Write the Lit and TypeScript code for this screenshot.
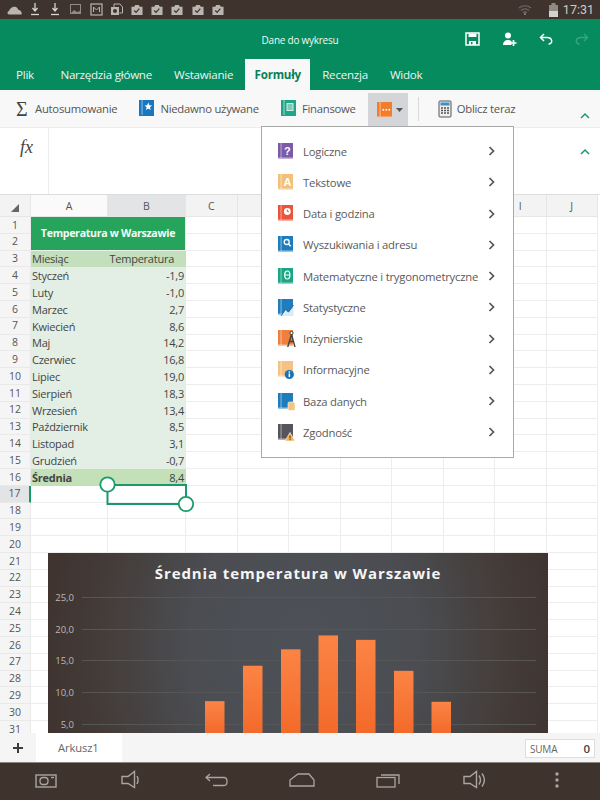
import { LitElement, html, css, svg } from "lit";
import { customElement } from "lit/decorators.js";

const months: [string, string][] = [
  ["Styczeń", "-1,9"], ["Luty", "-1,0"], ["Marzec", "2,7"], ["Kwiecień", "8,6"],
  ["Maj", "14,2"], ["Czerwiec", "16,8"], ["Lipiec", "19,0"], ["Sierpień", "18,3"],
  ["Wrzesień", "13,4"], ["Październik", "8,5"], ["Listopad", "3,1"], ["Grudzień", "-0,7"],
];
const bars = [[205, 8.6], [243, 14.2], [281, 16.8], [318.5, 19.0], [356, 18.3], [394, 13.4], [431.5, 8.5]];
const ticks: [string, number][] = [["25,0", 44], ["20,0", 76], ["15,0", 107], ["10,0", 139], ["5,0", 171]];

const book = (color: string, inner: unknown = "", light = "rgba(255,255,255,.55)") => html`
  <svg class="book" width="17" height="19" viewBox="0 0 17 19">
    <rect x="1" y="1" width="15" height="16" fill=${color}></rect>
    <rect x="1" y="15.5" width="15" height="1.5" fill=${light}></rect>
    <rect x="3.6" y="1" width="0.9" height="15" fill=${light}></rect>
    ${inner}
  </svg>`;
const glyph = (t: string, size = 11) =>
  svg`<text x="10.3" y="12.6" text-anchor="middle" font-size=${size} font-weight="700" font-family="Liberation Sans, sans-serif" fill="#fff">${t}</text>`;

const menuItems: [string, unknown][] = [
  ["Logiczne", book("#7b5aa6", glyph("?"))],
  ["Tekstowe", book("#f2c078", glyph("A"))],
  ["Data i godzina", book("#e8553a", svg`<circle cx="10.3" cy="7.5" r="3.4" fill="#fff"></circle><path d="M10.3 5.6v2h1.6" stroke="#e8553a" fill="none"></path>`)],
  ["Wyszukiwania i adresu", book("#1f7dbd", svg`<circle cx="9.7" cy="7" r="2.5" fill="none" stroke="#fff" stroke-width="1.3"></circle><path d="M11.5 9l2.2 2.2" stroke="#fff" stroke-width="1.5"></path>`)],
  ["Matematyczne i trygonometryczne", book("#1aa583", svg`<ellipse cx="10.3" cy="8" rx="2.6" ry="4" fill="none" stroke="#fff" stroke-width="1.2"></ellipse><path d="M8 8h4.6" stroke="#fff"></path>`)],
  ["Statystyczne", book("#1f7dbd", svg`<path d="M4.5 18l4-6 3 2.5 5-6.5v10z" fill="#dfeaf3"></path><path d="M4 18l4.500-7 3 3 5-7" fill="none" stroke="#2a6fa8" stroke-width="1"></path>`)],
  ["Inżynierskie", book("#ee7f3c", svg`<circle cx="14.500" cy="4" r="1.600" fill="#fff" stroke="#444"></circle><path d="M14.500 5.500L10.700 18M14.500 5.500L18 18M12 12.500h5" fill="none" stroke="#444" stroke-width="1.400"></path>`)],
  ["Informacyjne", book("#f4c384", svg`<circle cx="12.300" cy="14.500" r="4.600" fill="#1673b8"></circle><rect x="11.600" y="13.500" width="1.500" height="3.600" fill="#fff"></rect><rect x="11.600" y="11.300" width="1.500" height="1.400" fill="#fff"></rect>`)],
  ["Baza danych", book("#1f7dbd", svg`<rect x="11" y="10" width="7" height="8.500" rx="1.500" fill="#f4c384" stroke="#fff" stroke-width=".6"></rect>`)],
  ["Zgodność", book("#55555b", svg`<path d="M13 9.500l5 8.500H8z" fill="#f3b24e" stroke="#fff" stroke-width=".6"></path><path d="M13 12.500v3M13 16.200v1" stroke="#333" stroke-width="1"></path>`)],
];

const navStroke = "#aaa5a1";

@customElement("app-root")
export class AppRoot extends LitElement {
  static styles = css`
    :host { display: block; width: 600px; height: 800px; font-family: "Open Sans", "Noto Sans", sans-serif; }
    .app { position: relative; width: 600px; height: 800px; display: flex; flex-direction: column; overflow: hidden; background: #fff; }
    svg { display: block; flex: none; }
    .book { overflow: visible; }

    .status { height: 19px; background: #3f332e; display: flex; align-items: center; padding: 0 6px 0 4.5px; flex: none; }
    .status-icons { display: grid; grid-auto-flow: column; grid-auto-columns: 20.35px; justify-items: center; align-items: center; flex: 1; }
    .clock { color: #cfcac6; font-size: 12.5px; font-family: "Roboto", sans-serif; margin-left: 5px; }
    .wifi { margin-right: 17px; }

    .title { height: 40px; flex: none; background: #068b5f; position: relative; display: flex; align-items: center; justify-content: flex-end; padding: 0 11px 0 0; gap: 22px; }
    .doc { position: absolute; left: 0; right: 0; top: 14px; text-align: center; color: #f1f8f5; font-size: 10px; letter-spacing: -0.25px; line-height: 14px; }
    .tabs { height: 31px; flex: none; background: #068b5f; display: flex; align-items: flex-end; padding-left: 16px; color: #e9f5f0; font-size: 11.6px; letter-spacing: -0.25px; }
    .tab { line-height: 31px; height: 31px; margin-right: 22px; white-space: nowrap; }
    .tab.first { margin-right: 26.5px; }
    .tab.on { width: 65px; text-align: center; background: #f8f8f8; color: #0a7f58; font-weight: 700; margin: 0 12px 0 -10px; }

    .ribbon { height: 37px; flex: none; background: #f8f8f8; display: flex; align-items: center; padding-left: 16px; color: #555; font-size: 11.3px; letter-spacing: -0.25px; position: relative; }
    .ri { display: flex; align-items: center; white-space: nowrap; }
    .ri.next { margin-left: 21px; }
    .ri .book { margin-right: 5px; }
    .ri .calc { margin-right: 5px; }
    .sigma { font-family: "Liberation Serif", serif; font-size: 20px; color: #444; width: 19px; line-height: 20px; }
    .active { align-self: flex-end; height: 34px; width: 40px; background: #d3d5d8; display: flex; align-items: center; padding-left: 8px; box-sizing: border-box; gap: 3px; margin-left: 12px; }
    .divider { width: 1px; height: 24px; background: #d9d9d9; margin: 0 19px 0 10px; }
    .chev { position: absolute; }
    .ribbon .chev { left: 580px; top: 22px; }

    .formula { height: 68px; flex: none; background: #fff; border-top: 1px solid #ececec; border-bottom: 1px solid #dcdcdc; box-sizing: border-box; display: flex; position: relative; }
    .fx { width: 49px; box-sizing: border-box; border-right: 1px solid #ececec; font-family: "Liberation Serif", serif; font-style: italic; font-size: 18px; color: #444; padding: 9px 0 0 20px; }
    .formula .chev { left: 580px; top: 20px; }

    .sheet { flex: 1; position: relative; overflow: hidden; }
    .grid { display: grid; grid-template-columns: 31px 77px 78px repeat(8, 51.5px) 2px; grid-template-rows: 22px; grid-auto-rows: 16.8px; }
    .c { box-sizing: border-box; border-right: 1px solid #ededed; border-bottom: 1px solid #ededed; }
    .ch { background: #f3f3f3; border-color: #e6e6e6; color: #555; font-size: 10.5px; display: flex; align-items: center; justify-content: center; }
    .ch.sel-a { background: #fafafa; }
    .ch.sel-b { background: #e2e4e6; }
    .corner svg { margin: 4px 0 0 0; }
    .rh { background: #f5f5f5; border-color: #e9e9e9; color: #555; font-size: 10.5px; display: flex; align-items: center; justify-content: center; line-height: 1; }
    .rh.sel { background: #e2e4e6; border-right: 2px solid #1a9a68; }
    .head { grid-column: span 2; grid-row: span 2; background: #26a45c; color: #f5fbf7; font-weight: 700; font-size: 10.6px; letter-spacing: -0.3px; display: flex; align-items: center; justify-content: center; }
    .d { color: #444; font-size: 11px; letter-spacing: -0.25px; display: flex; align-items: center; line-height: 1; white-space: nowrap; border: none; padding: 0 2px 0 1px; }
    .d.r { justify-content: flex-end; }
    .d.sub { background: #c4dfbc; }
    .d.sub.hr { justify-content: flex-end; padding-right: 12px; }
    .d.body { background: #e3efe4; }
    .d.tot { background: #c3e0b9; }
    .d.b { font-weight: 700; }

    .selection { position: absolute; left: 99px; top: 281px; }

    .chart { position: absolute; left: 48px; top: 358px; width: 500px; height: 180px; overflow: hidden; background: radial-gradient(ellipse 255px 310px at 255px 95px, #4d5157 0%, #4b4d52 45%, #443c39 80%, #3f3430 100%); }
    .chart-title { text-align: center; color: #f6f5f4; font-size: 15px; font-weight: 700; letter-spacing: 0.9px; line-height: 22px; padding-top: 9px; }
    .chart svg { position: absolute; left: 0; top: 0; }
    .tick { font-size: 9.5px; fill: #bdb9b6; font-family: "Open Sans", sans-serif; }

    .menu { position: absolute; left: 261px; top: 126px; width: 253px; height: 332px; box-sizing: border-box; border: 1px solid #a9a9a9; background: #fff; padding: 8.5px 0 0 15px; display: flex; flex-direction: column; }
    .mi { height: 31.25px; flex: none; display: flex; align-items: center; color: #5a5a5a; font-size: 11.3px; letter-spacing: -0.22px; }
    .mi .label { margin-left: 9px; flex: 1; white-space: nowrap; }
    .mi .arrow { margin-right: 18px; }

    .sheets { height: 29px; flex: none; background: #f5f5f5; display: flex; align-items: stretch; position: relative; }
    .plus { width: 36px; display: flex; align-items: center; justify-content: center; }
    .stab { width: 86px; background: #fff; color: #666; font-size: 11.2px; letter-spacing: -0.1px; display: flex; align-items: center; padding-left: 22px; box-sizing: border-box; }
    .suma { margin: 6px 5px 4px auto; width: 70px; background: #fff; border: 1px solid #dedede; box-sizing: border-box; display: flex; align-items: center; justify-content: space-between; padding: 0 4px; font-size: 10px; letter-spacing: -0.2px; color: #666; }
    .suma b { font-size: 11.5px; font-weight: 600; color: #444; }

    .nav { height: 38px; flex: none; background: #3f332e; position: relative; border-top: 1px solid #8a8380; box-sizing: border-box; display: flex; align-items: center; padding: 0 0 3px 35px; }
    .nav .m64 { margin-left: 64px; }
    .nav .m60 { margin-left: 60px; }
    .nav .m61 { margin-left: 61px; }
    .nav .m63 { margin-left: 63px; }
    .nav .m68 { margin-left: 68px; }
  `;

  private chev() {
    return html`<svg class="chev" width="10" height="7" viewBox="0 0 10 7"><path d="M1 6l4-4 4 4" fill="none" stroke="#1a9a68" stroke-width="1.5"></path></svg>`;
  }

  private statusIcons() {
    const cl = html`<svg width="12" height="12" viewBox="0 0 13 13"><path d="M.5 3h3l1-2h4l1 2h3v9H.5z" fill="#bab5b0"></path><path d="M3.500 7l2 2 3.500-4" stroke="#3f332e" stroke-width="1.300" fill="none"></path></svg>`;
    const dl = html`<svg width="8" height="13" viewBox="0 0 8 13"><path d="M4 0v7M1.500 5L4 8l2.500-3" stroke="#d8d4d1" stroke-width="1.300" fill="none"></path><path d="M0 11.500h8" stroke="#d8d4d1" stroke-width="1.300"></path></svg>`;
    return html`<div class="status-icons">
      <svg width="16" height="10" viewBox="0 0 16 10"><path d="M2 9.500c-2 0-2-3 0-3.500 1-3 4-5 7-4 1 .5 2 1.500 2.500 3 2-.5 4 3 3 4.500z" fill="#b9b4b0"></path></svg>
      ${dl}${dl}
      <svg width="11" height="11" viewBox="0 0 11 11"><rect x=".5" y=".5" width="10" height="9" fill="none" stroke="#8f8a86"></rect><path d="M1 9l3-3 3 2 3-1v2z" fill="#8f8a86"></path></svg>
      <svg width="13" height="13" viewBox="0 0 13 13"><rect x="1" y="1" width="11" height="11" fill="none" stroke="#bab5b0" stroke-width="1.200"></rect><path d="M3.500 9V4l3 3 3-3v5" stroke="#bab5b0" fill="none"></path></svg>
      <svg width="13" height="13" viewBox="0 0 13 13"><path d="M1 4h8v8H1z" fill="#bab5b0"></path><circle cx="5" cy="8" r="2" fill="#3f332e"></circle><path d="M4 4V1h6l2.500 3v6h-3" fill="none" stroke="#bab5b0"></path></svg>
      ${cl}${cl}${cl}${cl}${cl}
    </div>`;
  }

  private grid() {
    const cols = ["A", "B", "C", "D", "E", "F", "G", "H", "I", "J"];
    const shown = (c: string) => ("DEFGH".includes(c) ? "" : c);
    const blanks = (n: number) => Array.from({ length: n }, () => html`<div class="c"></div>`);
    const rows: unknown[] = [];
    for (let r = 1; r <= 31; r++) {
      rows.push(html`<div class="c rh ${r === 17 ? "sel" : ""}">${r}</div>`);
      if (r === 1) rows.push(html`<div class="c head">Temperatura w Warszawie</div>`);
      else if (r === 2) { /* covered by the merged title */ }
      else if (r === 3) rows.push(html`<div class="c d sub">Miesiąc</div><div class="c d sub hr">Temperatura</div>`);
      else if (r >= 4 && r <= 15) {
        const [m, v] = months[r - 4];
        rows.push(html`<div class="c d body">${m}</div><div class="c d body r">${v}</div>`);
      } else if (r === 16) rows.push(html`<div class="c d tot b">Średnia</div><div class="c d tot r">8,4</div>`);
      else rows.push(blanks(2));
      rows.push(blanks(8));
      rows.push(html`<div></div>`);
    }
    return html`<div class="grid">
      <div class="c ch corner"><svg width="8" height="8" viewBox="0 0 8 8"><path d="M8 0v8H0z" fill="#666"></path></svg></div>
      ${cols.map((c, i) => html`<div class="c ch ${i === 0 ? "sel-a" : i === 1 ? "sel-b" : ""}">${shown(c)}</div>`)}
      <div></div>
      ${rows}
    </div>`;
  }

  private chart() {
    return html`<div class="chart">
      <div class="chart-title">Średnia temperatura w Warszawie</div>
      <svg width="500" height="180" viewBox="0 0 500 180">
        <defs>
          <linearGradient id="bar" x1="0" y1="0" x2="0" y2="1">
            <stop offset="0" stop-color="#fb8445"></stop>
            <stop offset="1" stop-color="#f36a2a"></stop>
          </linearGradient>
        </defs>
        ${ticks.map(([t, y]) => svg`
          <text class="tick" x="26" y=${y + 3.5} text-anchor="end">${t}</text>
          <line x1="34" x2="488" y1=${y + 0.5} y2=${y + 0.5} stroke="#575657" stroke-width="1"></line>`)}
        ${bars.map(([x, v]) => {
          const top = 755.5 - 6.32 * v - 553;
          return svg`<rect x=${x - 48} y=${top} width="19.5" height=${180 - top} fill="url(#bar)"></rect>`;
        })}
      </svg>
    </div>`;
  }

  private menu() {
    return html`<div class="menu">
      ${menuItems.map(([label, icon]) => html`<div class="mi">
        ${icon}<span class="label">${label}</span>
        <svg class="arrow" width="7" height="10" viewBox="0 0 7 10"><path d="M1.500 1l4 4-4 4" fill="none" stroke="#555" stroke-width="1.700"></path></svg>
      </div>`)}
    </div>`;
  }

  render() {
    const nb = navStroke;
    const speaker = (loud: boolean, cls: string) => html`<svg class=${cls} width="24" height="20" viewBox="0 0 24 20"><path d="M1 6.500h6L13.500 1.500v16L7 13.500H1z" fill="none" stroke=${nb} stroke-width="1.400"></path>${loud ? svg`<path d="M16 5.500c2 3 2 6 0 9M19 3.500c3 4 3 9 0 13" fill="none" stroke=${nb} stroke-width="1.400"></path>` : svg`<path d="M16 6c1.500 2.500 1.500 5 0 8" fill="none" stroke=${nb} stroke-width="1.400"></path>`}</svg>`;
    return html`<div class="app">
      <div class="status">
        ${this.statusIcons()}
        <svg class="wifi" width="14" height="11" viewBox="0 0 14 11"><path d="M1 4c3.500-3 8.500-3 12 0M3 6.500c2.500-2 5.500-2 8 0M5 8.500c1.200-.8 2.800-.8 4 0" fill="none" stroke="#6f6a66" stroke-width="1.100"></path><circle cx="7" cy="10" r="1" fill="#8f8a86"></circle></svg>
        <svg width="9" height="14" viewBox="0 0 9 14"><rect x="2.500" y="0" width="4" height="2" fill="#8f8a86"></rect><rect x="0" y="2" width="9" height="12" fill="#8f8a86"></rect><rect x="0" y="8" width="9" height="6" fill="#d5d1ce"></rect></svg>
        <span class="clock">17:31</span>
      </div>

      <div class="title">
        <div class="doc">Dane do wykresu</div>
        <svg width="15" height="14" viewBox="0 0 15 14"><path d="M1 1h13v12H1z" fill="none" stroke="#fff" stroke-width="1.500"></path><path d="M3.500 1.500h8v3.500h-8z" fill="#fff"></path><path d="M4 9h7v4H4z" fill="#fff"></path><rect x="6" y="10" width="1.500" height="2.200" fill="#068b5f"></rect></svg>
        <svg width="15" height="15" viewBox="0 0 15 15"><circle cx="6" cy="3.500" r="3" fill="#fff"></circle><path d="M1 13c0-3 2-5 5-5 2 0 3 .6 3.500 1.500V13z" fill="#fff"></path><path d="M11.500 8v6M8.500 11h6" stroke="#fff" stroke-width="1.700"></path></svg>
        <svg width="14" height="12" viewBox="0 0 14 12"><path d="M5 1L1.500 4.500 5 8" fill="none" stroke="#fff" stroke-width="1.500"></path><path d="M2 4.500h6c6 0 6 6.500 1.500 6.500" fill="none" stroke="#fff" stroke-width="1.500"></path></svg>
        <svg width="14" height="12" viewBox="0 0 14 12"><path d="M9 1l3.500 3.500L9 8" fill="none" stroke="#36a480" stroke-width="1.500"></path><path d="M12 4.500H6C0 4.500 0 11 4.500 11" fill="none" stroke="#36a480" stroke-width="1.500"></path></svg>
      </div>

      <div class="tabs">
        <div class="tab first">Plik</div>
        <div class="tab">Narzędzia główne</div>
        <div class="tab">Wstawianie</div>
        <div class="tab on">Formuły</div>
        <div class="tab">Recenzja</div>
        <div class="tab">Widok</div>
      </div>

      <div class="ribbon">
        <div class="ri"><span class="sigma">Σ</span>Autosumowanie</div>
        <div class="ri next">
          <svg class="book" width="17" height="19" viewBox="0 0 17 19"><rect x="1" y="1" width="15" height="16" fill="#1877be"></rect><rect x="3.600" y="1" width=".9" height="15" fill="#9cc8e6"></rect><path d="M10.300 3.500l1.100 2.700 2.700.2-2.100 1.800.7 2.800-2.400-1.500-2.400 1.500.7-2.800-2.100-1.800 2.700-.2z" fill="#fff"></path></svg>
          Niedawno używane
        </div>
        <div class="ri next">
          <svg class="book" width="17" height="19" viewBox="0 0 17 19"><rect x="1" y="1" width="15" height="16" fill="#1fa587"></rect><rect x="3.600" y="1" width=".9" height="15" fill="#a5dccf"></rect><rect x="6.500" y="4" width="7" height="8" fill="#d6efe8"></rect><path d="M7.500 6h5M7.500 8h5M7.500 10h5" stroke="#1fa587"></path></svg>
          Finansowe
        </div>
        <div class="active">
          <svg width="17" height="19" viewBox="0 0 17 19"><rect x="1" y="1" width="15" height="16" fill="#f07e2e"></rect><rect x="3.600" y="1" width=".9" height="15" fill="#fbc79f"></rect><rect x="1" y="15.500" width="15" height="1.500" fill="#fbc79f"></rect><rect x="6.500" y="8" width="1.600" height="1.600" fill="#fff"></rect><rect x="9.500" y="8" width="1.600" height="1.600" fill="#fff"></rect><rect x="12.500" y="8" width="1.600" height="1.600" fill="#fff"></rect></svg>
          <svg width="7" height="4" viewBox="0 0 7 4"><path d="M0 0h7L3.500 4z" fill="#555"></path></svg>
        </div>
        <div class="divider"></div>
        <div class="ri">
          <svg class="calc" width="14" height="18" viewBox="0 0 14 18"><rect x="1" y="1" width="12" height="16" rx="1" fill="#eee" stroke="#555"></rect><rect x="2.500" y="2.500" width="9" height="3" fill="#3d8fc6"></rect><path d="M3 8h2M6 8h2M9 8h2M3 10.500h2M6 10.500h2M9 10.500h2M3 13h2M6 13h2M9 13h2" stroke="#555" stroke-width="1.500"></path></svg>
          Oblicz teraz
        </div>
        ${this.chev()}
      </div>

      <div class="formula">
        <div class="fx">fx</div>
        ${this.chev()}
      </div>

      <div class="sheet">
        ${this.grid()}
        <svg class="selection" width="100" height="60" viewBox="0 0 100 60">
          <path d="M8.500 9H87V28H8.500V9" fill="none" stroke="#1a9a68" stroke-width="2"></path>
          <circle cx="8.500" cy="8.500" r="7.200" fill="#fff" stroke="#1a9a68" stroke-width="1.800"></circle>
          <circle cx="87" cy="28" r="7.200" fill="#fff" stroke="#1a9a68" stroke-width="1.800"></circle>
        </svg>
        ${this.chart()}
      </div>

      ${this.menu()}

      <div class="sheets">
        <div class="plus"><svg width="12" height="12" viewBox="0 0 12 12"><path d="M6 1v10M1 6h10" stroke="#3c3c3c" stroke-width="2"></path></svg></div>
        <div class="stab">Arkusz1</div>
        <div class="suma"><span>SUMA</span><b>0</b></div>
      </div>

      <div class="nav">
        <svg width="22" height="15" viewBox="0 0 22 15"><rect x="1" y="2" width="20" height="12" fill="none" stroke=${nb} stroke-width="1.400"></rect><rect x="5" y="4.500" width="8" height="7" rx="3" fill="none" stroke=${nb} stroke-width="1.300"></rect><path d="M16 4.500h3" stroke=${nb} stroke-width="1.400"></path></svg>
        ${speaker(false, "m64")}
        <svg class="m60" width="24" height="14" viewBox="0 0 24 14"><path d="M5 1L1 4.500 5 8M1.500 4.500H19c4 0 4 8 0 8H8" fill="none" stroke=${nb} stroke-width="1.300"></path></svg>
        <svg class="m60" width="26" height="14" viewBox="0 0 26 14"><path d="M1 13V7L9 1h11l5 6v6z" fill="none" stroke=${nb} stroke-width="1.300"></path></svg>
        <svg class="m61" width="24" height="16" viewBox="0 0 24 16"><rect x="1" y="5.500" width="18" height="9.500" fill="none" stroke=${nb} stroke-width="1.300"></rect><path d="M5 3h18v9" fill="none" stroke=${nb} stroke-width="1.300"></path></svg>
        ${speaker(true, "m63")}
        <svg class="m68" width="4" height="16" viewBox="0 0 4 16"><circle cx="2" cy="2" r="1.700" fill=${nb}></circle><circle cx="2" cy="8" r="1.700" fill=${nb}></circle><circle cx="2" cy="14" r="1.700" fill=${nb}></circle></svg>
      </div>
    </div>`;
  }
}
